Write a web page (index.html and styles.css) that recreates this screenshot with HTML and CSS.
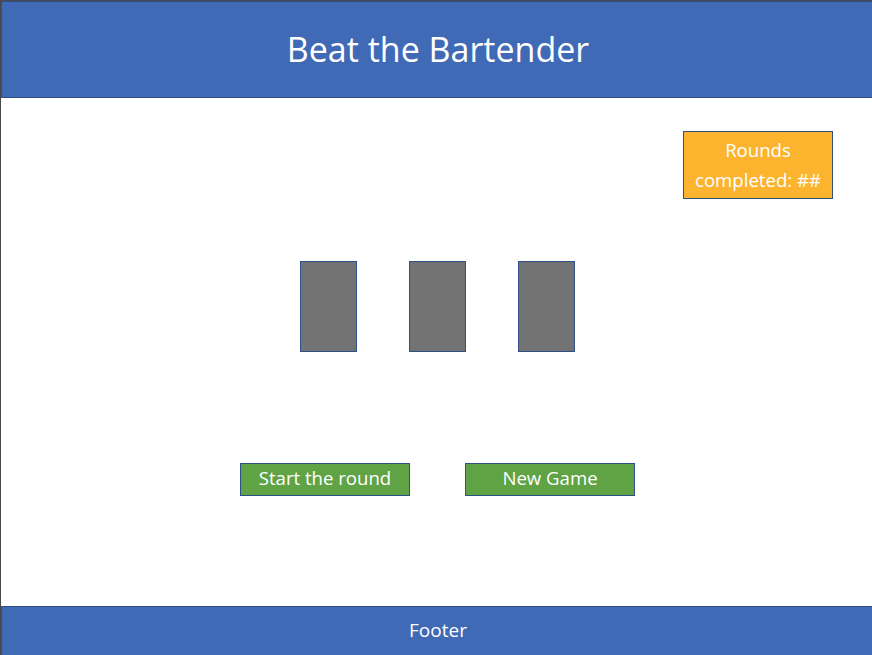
FILE: index.html
```html
<!DOCTYPE html>
<html lang="en">
<head>
<meta charset="utf-8">
<title>Beat the Bartender</title>
<link rel="stylesheet" href="styles.css">
</head>
<body>
<div class="page">
  <header class="header">
    <h1 class="title">Beat the Bartender</h1>
  </header>
  <main class="main">
    <div class="score-row">
      <div class="score">Rounds<br>completed: ##</div>
    </div>
    <div class="cards">
      <div class="card"></div>
      <div class="card"></div>
      <div class="card"></div>
    </div>
    <div class="actions">
      <button class="btn">Start the round</button>
      <button class="btn">New Game</button>
    </div>
  </main>
  <footer class="footer">Footer</footer>
</div>
</body>
</html>
```

FILE: styles.css
```css
* { box-sizing: border-box; }
html, body { margin: 0; padding: 0; background: #ffffff; }
body {
  font-family: "Open Sans", "Noto Sans", sans-serif;
  width: 872px;
  height: 655px;
  overflow: hidden;
}
.page {
  width: 872px;
  height: 655px;
  border-left: 1px solid #4a4a4a;
  border-top: 1px solid #4a4a4a;
  display: flex;
  flex-direction: column;
}
.header {
  height: 97px;
  background: #4069b6;
  border-left: 1px solid #2f4f8a;
  border-top: 1px solid #2f4f8a;
  border-bottom: 1px solid #2f4f8a;
  display: flex;
  align-items: center;
  justify-content: center;
  padding-left: 2px;
  padding-bottom: 1px;
  flex: none;
}
.title {
  margin: 0;
  color: #ffffff;
  font-weight: 500;
  font-size: 34px;
  letter-spacing: 0;
}
.main {
  flex: 1;
  display: flex;
  flex-direction: column;
  align-items: center;
  padding-top: 33px;
  padding-left: 2px;
}
.score-row {
  align-self: stretch;
  display: flex;
  justify-content: flex-end;
  padding-right: 39px;
}
.score {
  width: 150px;
  height: 68px;
  background: #fcb42f;
  border: 1px solid #2f4f8a;
  color: #ffffff;
  font-size: 18.6px;
  font-weight: 500;
  line-height: 30px;
  text-align: center;
  padding-top: 3px;
}
.cards {
  display: flex;
  gap: 52px;
  margin-top: 62px;
}
.card {
  width: 57px;
  height: 91px;
  background: #737373;
  border: 1px solid #2f4f8a;
}
.actions {
  display: flex;
  gap: 55px;
  margin-top: 111px;
}
.btn {
  width: 170px;
  height: 33px;
  background: #5fa345;
  border: 1px solid #2f4f8a;
  color: #ffffff;
  font-family: "Open Sans", "Noto Sans", sans-serif;
  font-size: 18.6px;
  font-weight: 500;
  padding: 0 0 2px;
  line-height: 1;
  border-radius: 0;
}
.footer {
  height: 49px;
  flex: none;
  background: #4069b6;
  border-top: 1px solid #2f4f8a;
  border-left: 1px solid #2f4f8a;
  color: #ffffff;
  font-size: 19px;
  font-weight: 500;
  display: flex;
  align-items: center;
  justify-content: center;
  padding-left: 2px;
  padding-bottom: 3px;
}
```
